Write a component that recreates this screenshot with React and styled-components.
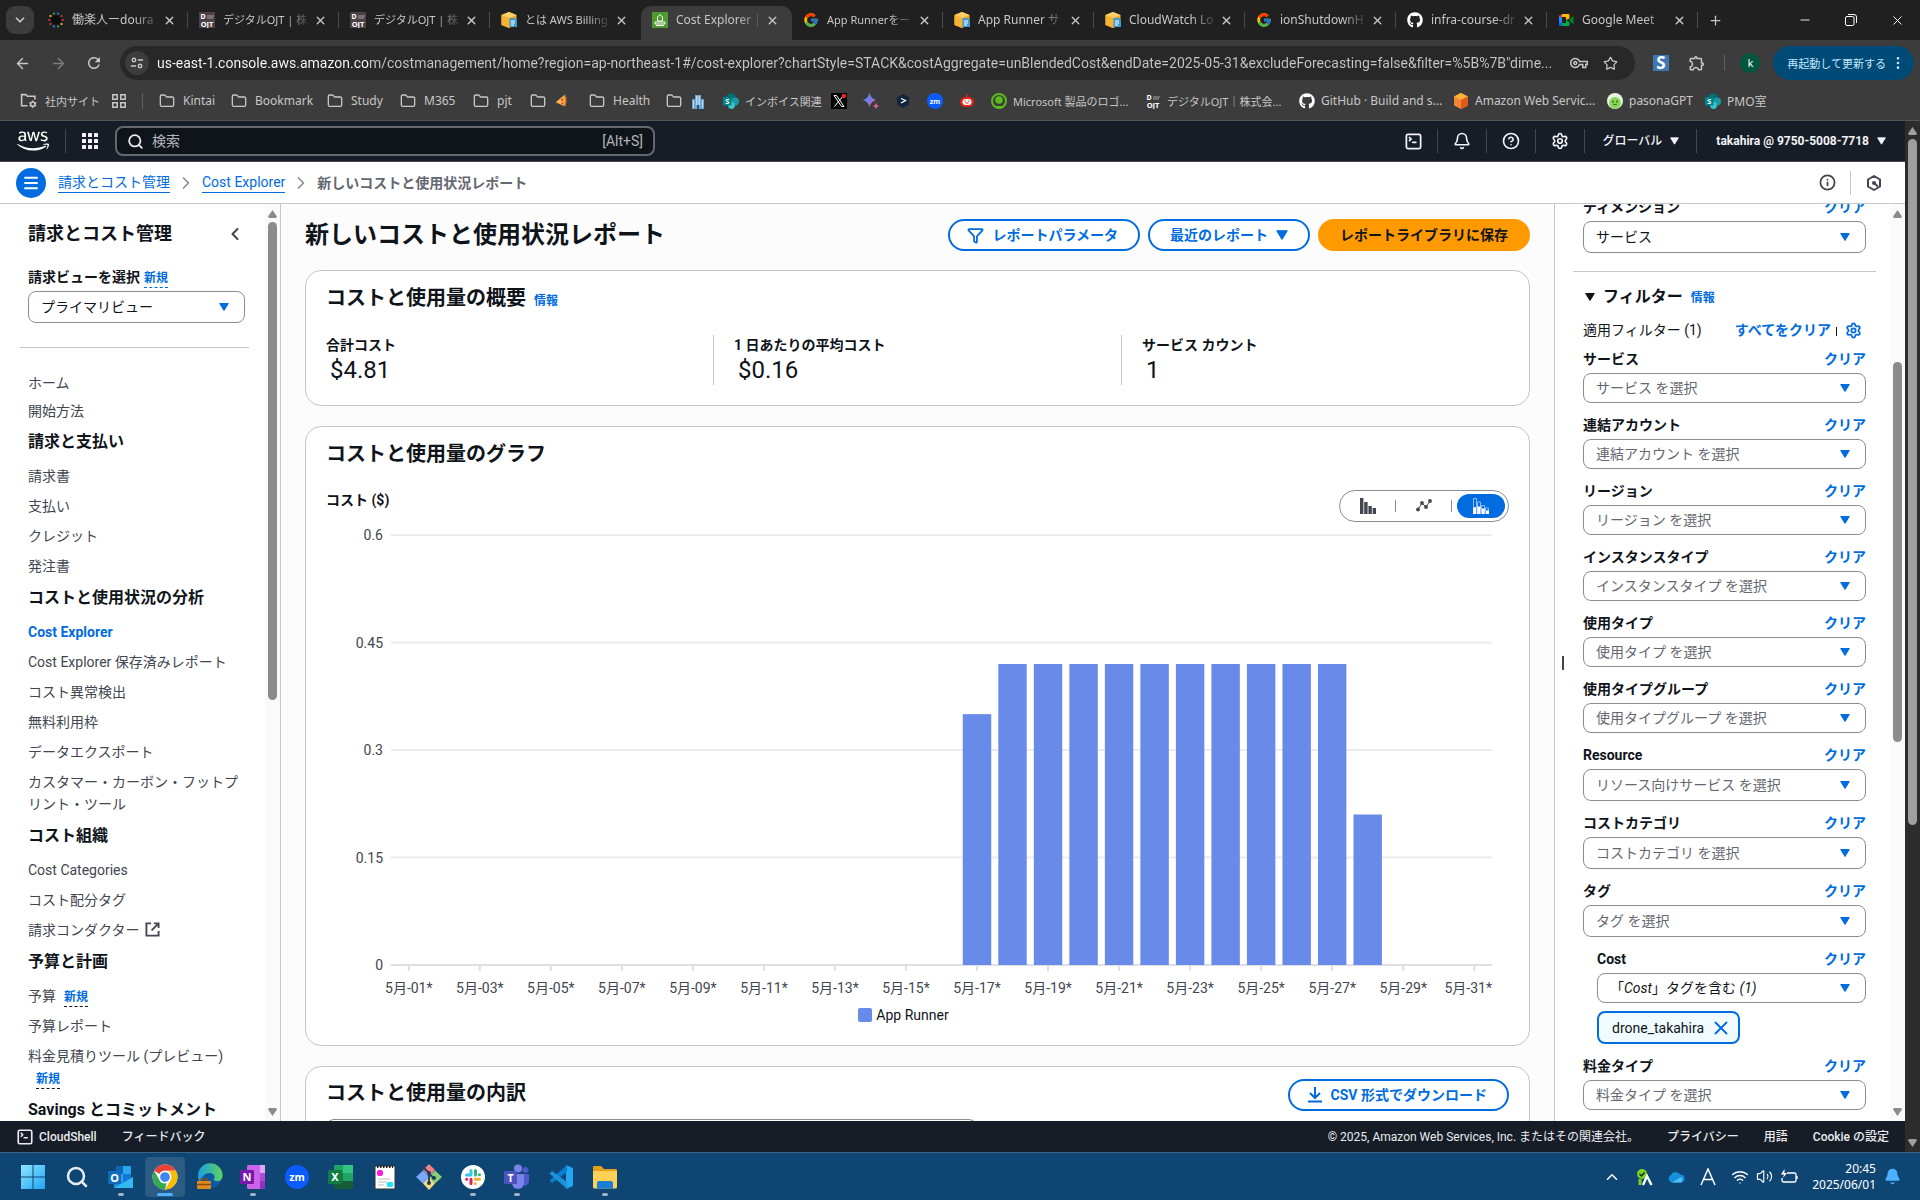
import React, { useId } from "react";
import styled, { createGlobalStyle, css } from "styled-components";
import {
  ArrowLeft, ArrowRight, Bell, ChevronDown, ChevronLeft, ChevronRight, ChevronUp, Search,
  CircleHelp, Folder, Info, Minus, MoreVertical, Plus, Settings, SquareTerminal,
  Star, Volume2, Wifi, X, Funnel, Menu,
} from "lucide-react";
import { FaAws, FaGithub } from "react-icons/fa";
import { FcGoogle } from "react-icons/fc";
import { MdOutlineExtension, MdOutlineVpnKey, MdRefresh } from "react-icons/md";

const uiFont = `"Noto Sans", "Open Sans", "Noto Sans CJK JP", sans-serif`;
const awsFont = `Roboto, "Noto Sans CJK JP", sans-serif`;

const c = {
  ink: "#0f141a",
  body: "#424650",
  muted: "#656871",
  blue: "#006ce0",
  line: "#c6c6cd",
  field: "#8c8c94",
  nav: "#161d26",
};

const GlobalStyle = createGlobalStyle`
  *, *::before, *::after { box-sizing: border-box; }
  body { margin: 0; background: #fff; }
  button, input, select { font: inherit; color: inherit; margin: 0; }
  button { background: none; border: 0; padding: 0; cursor: pointer; }
  ul, h1, h2, h3, p, dl, dd, dt { margin: 0; padding: 0; }
  ul { list-style: none; }
  a { color: inherit; text-decoration: none; }
  svg { display: block; flex: none; }
`;

const Screen = styled.div`
  display: flex;
  flex-direction: column;
  height: 100vh;
  overflow: hidden;
  font-family: ${uiFont};
`;

/* ---------- browser ---------- */

const TabStrip = styled.div`
  display: flex;
  align-items: flex-end;
  height: 40px;
  flex: none;
  background: #202020;
  color: #c7c7c7;
  font-size: 12px;
`;

const TabSearch = styled.button`
  display: grid;
  place-items: center;
  width: 28px;
  height: 28px;
  margin: 0 3px 6px 6px;
  border-radius: 9px;
  background: #3c3c3c;
`;

const Tab = styled.div`
  display: flex;
  align-items: center;
  gap: 8px;
  width: 151px;
  height: 34px;
  padding: 0 12px 6px 11px;
  ${(p) => p.$active && css`
    background: #3c3c3c;
    border-radius: 10px 10px 0 0;
  `}
`;

const TabTitle = styled.span`
  flex: 1;
  margin-right: -8px;
  overflow: hidden;
  white-space: nowrap;
  font-size: ${(p) => (p.$dense ? 11 : 12)}px;
  line-height: 18px;
  mask-image: linear-gradient(to right, #000 70%, transparent 100%);
`;

const TabDivider = styled.span`
  width: 1px;
  height: 16px;
  background: #4b4b4b;
  margin: 0 -12px 0 2px;
`;

const IconButton = styled.button`
  display: grid;
  place-items: center;
  width: ${(p) => p.$w || 24}px;
  height: ${(p) => p.$h || 24}px;
`;

const TabClose = styled(IconButton).attrs({ $w: 16, $h: 16 })``;

const NewTab = styled(IconButton).attrs({ $w: 34, $h: 34 })`
  padding-bottom: 6px;
`;

const WindowButtons = styled.div`
  display: flex;
  align-items: center;
  height: 40px;
  margin-left: auto;
  color: #fff;
`;

const Toolbar = styled.div`
  display: flex;
  align-items: center;
  height: 46px;
  flex: none;
  padding: 0 6px 0 4px;
  background: #3c3c3c;
  color: #c7c7c7;
`;

const AddressBar = styled.label`
  display: flex;
  align-items: center;
  flex: 1;
  height: 34px;
  margin: 0 18px 0 8px;
  padding: 0 12px 0 5px;
  border-radius: 17px;
  background: #282828;
`;

const SiteInfo = styled.span`
  display: grid;
  place-items: center;
  width: 24px;
  height: 24px;
  border-radius: 50%;
  background: #3c3c3c;
`;

const AddressInput = styled.input`
  flex: 1;
  min-width: 0;
  height: 30px;
  margin-left: 8px;
  padding: 0;
  border: 0;
  outline: 0;
  font-family: Roboto, sans-serif;
  font-size: 14px;
  color: transparent;
  background: linear-gradient(to right, #fff 213px, #c7c7c7 213px);
  background-clip: text;
  text-overflow: ellipsis;
`;

const ToolbarDivider = styled.span`
  width: 1px;
  height: 16px;
  background: #5f5f5f;
  margin: 0 15px 0 0;
`;

const Avatar = styled.span`
  display: grid;
  place-items: center;
  width: 20px;
  height: 20px;
  border-radius: 50%;
  background: #00563f;
  color: #fff;
  font-size: 11px;
  line-height: 20px;
`;

const UpdateButton = styled.button`
  display: flex;
  align-items: center;
  gap: 4px;
  height: 34px;
  margin-left: 13px;
  padding: 0 8px 0 14px;
  border-radius: 17px;
  background: #004a77;
  color: #c2e7ff;
  font-size: 11px;
`;

const Bookmarks = styled.nav`
  display: flex;
  align-items: center;
  height: 35px;
  flex: none;
  padding: 0 20px 5px;
  background: #3c3c3c;
  border-bottom: 1px solid #555;
  color: #c7c7c7;
  font-size: 12px;
`;

const Bookmark = styled.a`
  display: flex;
  align-items: center;
  gap: ${(p) => (p.$folder ? 8 : 6)}px;
  width: ${(p) => p.$w}px;
  height: 24px;
  font-size: ${(p) => (p.$dense ? 11 : 12)}px;
  white-space: nowrap;
  flex: none;
`;

const BookmarkDivider = styled.span`
  width: 1px;
  height: 16px;
  background: #5f5f5f;
  margin: 0 16px 0 0;
`;

/* ---------- scroll bars ---------- */

const Bar = styled.div`
  display: flex;
  flex-direction: column;
  align-items: center;
  width: 15px;
  flex: none;
  padding: 6px 0 5px;
  background: ${(p) => (p.$dark ? "#2c2c2c" : "#fafafa")};
  color: ${(p) => (p.$dark ? "#9f9f9f" : "#8b8b8b")};
`;

const Track = styled.div`
  display: flex;
  flex-direction: column;
  align-items: center;
  flex: 1;
  padding: 4px 0;
`;

const Space = styled.span`
  flex: ${(p) => p.$n} 0 0;
`;

const Thumb = styled.span`
  flex: ${(p) => p.$n} 0 0;
  width: 9px;
  border-radius: 5px;
  background: currentColor;
`;

function ScrollBar({ before, size, after, dark }) {
  return (
    <Bar $dark={dark} aria-hidden="true">
      <svg width="9" height="8"><path d="M4.500 0 9 6.500 8 8H1L0 6.500Z" fill="currentColor" /></svg>
      <Track>
        <Space $n={before} />
        <Thumb $n={size} />
        <Space $n={after} />
      </Track>
      <svg width="9" height="8"><path d="M4.500 8 9 1.500 8 0H1L0 1.500Z" fill="currentColor" /></svg>
    </Bar>
  );
}

/* ---------- console frame ---------- */

const Viewport = styled.div`
  display: flex;
  flex: 1;
  min-height: 0;
  font-family: ${awsFont};
  font-size: 14px;
  line-height: 20px;
  color: ${c.ink};
`;

const Page = styled.div`
  display: flex;
  flex-direction: column;
  flex: 1;
  min-width: 0;
`;

const TopNav = styled.header`
  display: flex;
  align-items: center;
  height: 41px;
  flex: none;
  padding-left: 17px;
  background: ${c.nav};
  border-bottom: 1px solid #424650;
  color: #f3f3f7;
  font-size: 12px;
  font-weight: 700;
`;

const NavDivider = styled.span`
  width: 1px;
  height: 24px;
  background: #424650;
  margin: 0 ${(p) => p.$m || 0}px;
`;

const SearchBox = styled.label`
  display: flex;
  align-items: center;
  gap: 8px;
  width: 540px;
  height: 30px;
  margin-left: 17px;
  margin-right: auto;
  padding: 0 10px;
  border: 2px solid #656871;
  border-radius: 8px;
  background: #0f141a;
  color: #b4b4bb;
  font-size: 14px;
  font-weight: 400;
`;

const SearchInput = styled.input`
  flex: 1;
  min-width: 0;
  border: 0;
  outline: 0;
  padding: 0;
  background: none;
  &::placeholder { color: #b4b4bb; opacity: 1; }
`;

const NavButton = styled.button`
  display: flex;
  align-items: center;
  justify-content: center;
  gap: 8px;
  height: 40px;
  min-width: 48px;
  padding: 0 ${(p) => p.$pad || 0}px;
  font-weight: ${(p) => (p.$light ? 500 : 700)};
`;

const Crumbs = styled.div`
  display: flex;
  align-items: center;
  height: 42px;
  flex: none;
  padding: 0 22px 0 16px;
  background: #fff;
  border-bottom: 1px solid ${c.line};
`;

const MenuButton = styled.button`
  display: grid;
  place-items: center;
  width: 30px;
  height: 30px;
  margin-right: 12px;
  border-radius: 50%;
  background: ${c.blue};
  color: #fff;
`;

const CrumbLink = styled.a`
  color: ${c.blue};
  border-bottom: 1px solid ${c.blue};
  line-height: 19px;
`;

const CrumbArrow = styled(ChevronRight).attrs({ size: 20, color: c.field })`
  margin: 0 6px;
`;

const CrumbCurrent = styled.span`
  color: ${c.muted};
  font-weight: 700;
`;

const CrumbTools = styled.div`
  display: flex;
  align-items: center;
  gap: 14px;
  margin-left: auto;
  color: ${c.body};
`;

const ToolDivider = styled.span`
  width: 1px;
  height: 24px;
  background: ${c.line};
`;

const Columns = styled.div`
  display: flex;
  flex: 1;
  min-height: 0;
  background: #fcfcfd;
`;

/* ---------- side navigation ---------- */

const SideNav = styled.aside`
  display: flex;
  width: 281px;
  flex: none;
  background: #fff;
  border-right: 1px solid ${c.line};
`;

const SideBody = styled.div`
  flex: 1;
  min-width: 0;
  padding: 19px 16px 0 20px;
  overflow: hidden;
`;

const SideInner = styled.div`
  padding: 0 4px 0 8px;
`;

const SideHead = styled.div`
  display: flex;
  align-items: center;
  justify-content: space-between;
  margin-bottom: 22px;
`;

const SideTitle = styled.h2`
  font-size: 18px;
  line-height: 22px;
`;

const FieldLabel = styled.label`
  display: block;
  height: 20px;
  font-weight: 700;
  line-height: 20px;
`;

const NewTag = styled.a`
  display: inline-block;
  margin-left: ${(p) => p.$gap || 8}px;
  color: ${c.blue};
  font-size: 12px;
  font-weight: 700;
  line-height: 18px;
  border-bottom: 1px dashed ${(p) => p.$edge || c.ink};
`;

const Rule = styled.hr`
  height: 1px;
  margin: 24px 0 21px;
  border: 0;
  background: ${c.line};
`;

const NavGroupTitle = styled.h3`
  font-size: 16px;
  line-height: 20px;
  padding: 7px 0 9px;
`;

const NavItem = styled.li`
  padding: ${(p) => (p.$tight ? 3 : 4)}px 0;
  line-height: 22px;
  color: ${(p) => (p.$active ? c.blue : c.body)};
  font-weight: ${(p) => (p.$active ? 700 : 400)};
`;

const InlineIcon = styled.span`
  display: inline-block;
  margin-left: 6px;
  vertical-align: -2px;
`;

/* ---------- form parts ---------- */

const SelectWrap = styled.div`
  display: flex;
  align-items: center;
  position: relative;
  margin-top: 4px;
`;

const fieldBox = css`
  width: 100%;
  height: ${(p) => p.$h || 30}px;
  padding: 0 36px 0 12px;
  border: 1px solid ${c.field};
  border-radius: 8px;
  background: #fff;
  text-align: left;
`;

const SelectBox = styled.select`
  ${fieldBox}
  appearance: none;
  color: ${(p) => (p.$empty ? c.muted : c.ink)};
`;

const MultiSelect = styled.button`
  ${fieldBox}
`;

const SelectCaret = styled.span`
  position: absolute;
  right: 16px;
  color: ${c.blue};
  pointer-events: none;
`;

const Caret = ({ w = 10, h = 8 }) => (
  <svg width={w} height={h} viewBox="0 0 10 8" aria-hidden="true">
    <path d="M.7.500H9.300L5 7.500Z" fill="currentColor" stroke="currentColor" strokeLinejoin="round" />
  </svg>
);

function Select({ id, value, height, empty }) {
  return (
    <SelectWrap>
      <SelectBox id={id} $h={height} $empty={empty}>
        <option>{value}</option>
      </SelectBox>
      <SelectCaret><Caret /></SelectCaret>
    </SelectWrap>
  );
}

/* ---------- main ---------- */

const Main = styled.main`
  flex: 1;
  min-width: 0;
  padding: 15px 24px 0;
  overflow: hidden;
`;

const PageHead = styled.div`
  display: flex;
  align-items: center;
  gap: 8px;
  margin-bottom: 19px;
`;

const PageTitle = styled.h1`
  flex: 1;
  font-size: 24px;
  line-height: 30px;
`;

const PillButton = styled.button`
  display: flex;
  align-items: center;
  gap: 8px;
  height: 32px;
  padding: 0 20px 0 ${(p) => (p.$icon ? 17 : 20)}px;
  border: 2px solid ${(p) => (p.$primary ? "#ff9900" : c.blue)};
  border-radius: 16px;
  background: ${(p) => (p.$primary ? "#ff9900" : "#fff")};
  color: ${(p) => (p.$primary ? c.ink : c.blue)};
  font-weight: 700;
  white-space: nowrap;
`;

const Card = styled.section`
  margin-bottom: 20px;
  padding: ${(p) => p.$top || 13}px 20px 20px;
  border: 1px solid ${c.line};
  border-radius: 16px;
  background: #fff;
`;

const CardTitle = styled.h2`
  font-size: 20px;
  line-height: 28px;
`;

const InfoLink = styled.a`
  margin-left: 8px;
  color: ${c.blue};
  font-size: 12px;
  font-weight: 700;
  line-height: 16px;
`;

const Metrics = styled.dl`
  display: grid;
  grid-template-columns: repeat(3, 1fr);
  column-gap: 41px;
  margin-top: 23px;
`;

const Metric = styled.div`
  & + & {
    margin-left: -21px;
    padding-left: 20px;
    border-left: 1px solid ${c.line};
  }
`;

const MetricLabel = styled.dt`
  font-weight: 700;
`;

const MetricValue = styled.dd`
  padding-left: 4px;
  font-size: 24px;
  line-height: 30px;
`;

const SplitRow = styled.div`
  display: flex;
  justify-content: space-between;
  align-items: flex-start;
  margin-top: ${(p) => p.$gap || 0}px;
`;

const AxisTitle = styled.span`
  font-weight: 700;
`;

const Segments = styled.div`
  display: flex;
  align-items: center;
  height: 32px;
  padding-right: 3px;
  border: 1px solid ${c.field};
  border-radius: 16px;
  color: ${c.body};
`;

const Segment = styled.button`
  display: grid;
  place-items: center;
  width: ${(p) => (p.$active ? 48 : 55)}px;
  height: 24px;
  margin-left: ${(p) => (p.$active ? 5 : 0)}px;
  border-radius: 12px;
  background: ${(p) => (p.$active ? c.blue : "none")};
  color: ${(p) => (p.$active ? "#fff" : c.body)};
`;

const SegmentDivider = styled.span`
  width: 1px;
  height: 12px;
  background: ${c.field};
`;

const PlotArea = styled.div`
  padding: 0 17px 0 65px;
`;

const Plot = styled.svg`
  width: 100%;
  height: 483px;
  overflow: visible;
`;

const PlotText = styled.text`
  fill: ${c.body};
  font-size: 14px;
`;

const Legend = styled.div`
  display: flex;
  align-items: center;
  justify-content: center;
  gap: 4px;
  padding-right: 28px;
`;

const Swatch = styled.span`
  width: 14px;
  height: 14px;
  border-radius: 2px;
  background: #688ae8;
`;

const TableSearch = styled.input`
  display: block;
  width: 55%;
  height: 32px;
  margin-top: 8px;
  border: 1px solid ${c.field};
  border-radius: 8px;
`;

const CHART_TOP = 13;
const CHART_HEIGHT = 430;
const CHART_MAX = 0.6;
const costs = Array.from({ length: 31 }, (_, i) => {
  const day = i + 1;
  if (day === 17) return 0.35;
  if (day === 28) return 0.21;
  return day > 17 && day < 28 ? 0.42 : 0;
});
const yOf = (v) => CHART_TOP + CHART_HEIGHT * (1 - v / CHART_MAX);
const xOf = (i) => `${((i + 0.5) / 31) * 100}%`;

function CostChart() {
  return (
    <>
      <PlotArea>
        <Plot role="img" aria-label="コストと使用量のグラフ">
          {[0.6, 0.45, 0.3, 0.15, 0].map((v) => (
            <g key={v}>
              <line x1="0" x2="100%" y1={yOf(v)} y2={yOf(v)} stroke={v ? "#ebebf0" : "#dedee3"} strokeWidth="2" />
              <PlotText x="-8" y={yOf(v) + 5} textAnchor="end">{v}</PlotText>
            </g>
          ))}
          {costs.map((v, i) => (
            <g key={i}>
              {v > 0 && (
                <rect x={`${((i + 0.1) / 31) * 100}%`} width={`${(0.8 / 31) * 100}%`} y={yOf(v)} height={yOf(0) - yOf(v)} fill="#688ae8" />
              )}
              {i % 2 === 0 && (
                <>
                  <line x1={xOf(i)} x2={xOf(i)} y1={yOf(0)} y2={yOf(0) + 6} stroke="#dedee3" strokeWidth="2" />
                  <PlotText x={i === 30 ? "100%" : xOf(i)} y={yOf(0) + 28} textAnchor={i === 30 ? "end" : "middle"}>
                    {`5月-${String(i + 1).padStart(2, "0")}*`}
                  </PlotText>
                </>
              )}
            </g>
          ))}
        </Plot>
      </PlotArea>
      <Legend><Swatch />App Runner</Legend>
    </>
  );
}

/* ---------- filter panel ---------- */

const Panel = styled.aside`
  display: flex;
  width: 351px;
  flex: none;
  background: #fff;
  border-left: 1px solid ${c.line};
`;

const Handle = styled.span`
  align-self: center;
  width: 2px;
  height: 14px;
  margin: 0 9px 0 7px;
  background: ${c.body};
`;

const PanelBody = styled.div`
  flex: 1;
  min-width: 0;
  padding-right: 14px;
  overflow: hidden;
`;

const PanelScroll = styled.div`
  margin-top: -7px;
`;

const PanelGroup = styled.div`
  padding: 0 10px;
`;

const PanelRule = styled.hr`
  height: 1px;
  margin: 18px 0 15px;
  border: 0;
  background: ${c.line};
`;

const FilterHead = styled.div`
  display: flex;
  align-items: center;
  gap: 8px;
  height: 20px;
  padding-left: 2px;
`;

const FilterTitle = styled.h3`
  font-size: 16px;
  line-height: 20px;
`;

const FilterSummary = styled.div`
  display: flex;
  align-items: center;
  gap: 5px;
  height: 20px;
  margin: 13px 0 9px;
  padding-right: 4px;
`;

const Grow = styled.span`
  flex: 1;
`;

const LinkButton = styled.button`
  color: ${c.blue};
  font-weight: 700;
  line-height: 20px;
`;

const Pipe = styled.span`
  width: 1px;
  height: 9px;
  margin: 3px 3px 0 0;
  background: ${c.ink};
`;

const Field = styled.div`
  margin-bottom: 12px;
  padding-left: ${(p) => (p.$nested ? 14 : 0)}px;
`;

const FieldHead = styled.div`
  display: flex;
  justify-content: space-between;
`;

const Token = styled.span`
  display: inline-flex;
  align-items: center;
  gap: 6px;
  height: 33px;
  margin-top: 8px;
  padding: 0 6px 0 13px;
  border: 2px solid ${c.blue};
  border-radius: 8px;
  background: #f0fbff;
  vertical-align: top;
`;

function Filter({ label, value, height, filled }) {
  const id = useId();
  return (
    <Field>
      <FieldHead>
        <FieldLabel htmlFor={id}>{label}</FieldLabel>
        <LinkButton>クリア</LinkButton>
      </FieldHead>
      <Select id={id} value={value || `${label} を選択`} height={height} empty={!filled} />
    </Field>
  );
}

/* ---------- footer ---------- */

const Footer = styled.footer`
  display: flex;
  align-items: center;
  height: 31px;
  flex: none;
  padding: 0 16px;
  background: ${c.nav};
  color: #ebebf0;
  font-size: 12px;
`;

const FooterLink = styled.a`
  display: flex;
  align-items: center;
  gap: 5px;
  margin-right: ${(p) => (p.$first ? 25 : 0)}px;
  margin-left: ${(p) => p.$gap || 0}px;
  font-weight: 500;
`;

const Copyright = styled.span`
  margin-left: auto;
`;

/* ---------- task bar ---------- */

const TaskBar = styled.div`
  display: flex;
  align-items: center;
  height: 48px;
  flex: none;
  padding: 0 19px 0 13px;
  background: #0f4573;
  border-top: 1px solid #3d6486;
  color: #fff;
`;

const TaskButton = styled.button`
  display: flex;
  flex-direction: column;
  align-items: center;
  justify-content: center;
  width: 40px;
  height: 40px;
  margin-right: 4px;
  border-radius: 4px;
  background: ${(p) => (p.$active ? "rgba(255, 255, 255, 0.12)" : "none")};
  position: relative;
  &::after {
    content: "";
    position: absolute;
    bottom: 1px;
    width: ${(p) => (p.$active ? 16 : 6)}px;
    height: 3px;
    border-radius: 2px;
    background: ${(p) => (p.$active ? "#4cb2ff" : p.$open ? "#9fb4c6" : "transparent")};
  }
`;

const Tray = styled.div`
  display: flex;
  align-items: center;
  gap: 14px;
  margin-left: auto;
`;

const TrayStatus = styled.button`
  display: flex;
  align-items: center;
  gap: 7px;
`;

const Clock = styled.div`
  margin-right: -6px;
  text-align: right;
  font-size: 12px;
  line-height: 16px;
`;

/* ---------- drawings ---------- */

const Svg = ({ s = 16, box = 16, children, ...rest }) => (
  <svg width={s} height={s} viewBox={`0 0 ${box} ${box}`} fill="none" aria-hidden="true" {...rest}>{children}</svg>
);

const Glyph = ({ x = 8, y = 11, size = 9, fill = "#fff", children }) => (
  <text x={x} y={y} fontSize={size} fontWeight="700" fill={fill} textAnchor="middle" fontFamily="Noto Sans, sans-serif">{children}</text>
);

const DotsRing = () => (
  <Svg>
    {Array.from({ length: 10 }, (_, i) => {
      const a = (i * Math.PI) / 5;
      return <circle key={i} cx={8 + 6.8 * Math.cos(a)} cy={8 + 6.8 * Math.sin(a)} r="1.100" fill={["#e53935", "#fbc02d", "#43a047", "#1e88e5", "#e53935"][i % 5]} />;
    })}
    <circle cx="8" cy="8" r="4.600" fill="#0c0c0c" />
  </Svg>
);

const OjtIcon = ({ bare }) => (
  <Svg>
    {!bare && <rect width="16" height="16" fill="#4a4045" />}
    <Glyph x={4} y={7} size={7}>D</Glyph>
    <path d="M8 4h7M8 6h6" stroke="#bbb" strokeWidth=".8" />
    <Glyph x={8} y={14.5} size={7.5}>OJT</Glyph>
  </Svg>
);

const AwsDocIcon = () => (
  <Svg>
    <path d="M8 0 15.500 3v10L8 16 .5 13V3Z" fill="#f0a830" />
    <path d="M8 0 15.500 3 8 6 .5 3Z" fill="#fdd06b" />
    <path d="M8 6v10L.5 13V3Z" fill="#f5b335" />
    <path d="M8.500 6h5.500l2 2v7H8.500Z" fill="#3d9bd1" />
    <path d="M10 9h4M10 11h4M10 13h3" stroke="#fff" />
  </Svg>
);

const CostIcon = () => (
  <Svg>
    <rect width="16" height="16" fill="#4d9a2f" />
    <path d="M8 2.500 10.500 5v4h-5V5ZM3 10h10v2H3ZM4 13.500h8" stroke="#fff" />
  </Svg>
);

const MeetIcon = () => (
  <Svg>
    <path d="M1 3.500h3V13H2a1 1 0 0 1-1-1Z" fill="#2684fc" />
    <path d="M4 2v3H1Z" fill="#ea4335" />
    <path d="M4 2h6.500a1 1 0 0 1 1 1v3.500L8 8V5H4Z" fill="#ffba00" />
    <path d="M4 14v-3h4V8l3.500 2v3a1 1 0 0 1-1 1Z" fill="#00ac47" />
    <path d="M11 8 15.500 4v8.500Z" fill="#00832d" />
    <path d="M1 11h3v3H2a1 1 0 0 1-1-1Z" fill="#0066da" />
  </Svg>
);

const SharePointIcon = () => (
  <Svg>
    <circle cx="8" cy="5" r="4.800" fill="#036c70" />
    <circle cx="12" cy="8.500" r="4" fill="#1a9ba1" />
    <circle cx="8.500" cy="12.500" r="3.400" fill="#37c6d0" />
    <rect y="4" width="8.500" height="8.500" rx="1" fill="#038387" />
    <Glyph x={4.2} y={11} size={7.5}>S</Glyph>
  </Svg>
);

const XIcon = () => (
  <Svg>
    <rect width="16" height="16" fill="#000" />
    <path d="M3 2.500h2.500L13 13.500h-2.500ZM12.500 2.500 3.500 13.500" stroke="#fff" />
    <circle cx="13" cy="3" r="2.200" fill="#f4212e" />
  </Svg>
);

const SparkleIcon = () => (
  <Svg>
    <defs>
      <linearGradient id="spark" x1="0" y1="0" x2="1" y2="1">
        <stop stopColor="#3ba0f4" /><stop offset=".5" stopColor="#7a78e8" /><stop offset="1" stopColor="#e66a8c" />
      </linearGradient>
    </defs>
    <path d="M6.500 0Q8 5.500 13 7 8 8.500 6.500 14 5 8.500 0 7 5 5.500 6.500 0Z" fill="url(#spark)" />
    <path d="M13 10q.6 2.400 3 3-2.400.6-3 3-.6-2.400-3-3 2.400-.6 3-3Z" fill="#e0618f" />
  </Svg>
);

const HexPromptIcon = () => (
  <Svg>
    <path d="M8 1 14 4.500v7L8 15 2 11.500v-7Z" fill="#10263f" />
    <path d="m6 5.500 4.500 2L6 10" stroke="#fff" strokeWidth="1.300" />
  </Svg>
);

const ZoomIcon = ({ s = 16 }) => (
  <Svg s={s}>
    <circle cx="8" cy="8" r="8" fill="#0b5cff" />
    <Glyph y={10.5} size={7}>zm</Glyph>
  </Svg>
);

const RobotIcon = () => (
  <Svg>
    <path d="M8 1v3" stroke="#e2231a" strokeWidth="1.500" />
    <rect x="1" y="4" width="14" height="10" rx="5" fill="#e2231a" />
    <rect x="3.500" y="6" width="9" height="6" rx="3" fill="#fff" />
    <path d="M5.500 8h1.500M9 8h1.500M6.500 10h3" stroke="#e2231a" />
  </Svg>
);

const GreenRingIcon = () => (
  <Svg>
    <circle cx="8" cy="8" r="7" stroke="#5dbb1c" strokeWidth="2" />
    <circle cx="8" cy="7" r="3.800" fill="#5dbb1c" />
    <path d="M5 14h6" stroke="#5dbb1c" strokeWidth="2" />
  </Svg>
);

const CubeIcon = () => (
  <Svg>
    <path d="M8 0 15 3.500v9L8 16 1 12.500v-9Z" fill="#f58536" />
    <path d="M8 0 15 3.500 8 7 1 3.500Z" fill="#fbb03b" />
    <path d="M8 7v9l7-3.500v-9Z" fill="#e05a1b" />
  </Svg>
);

const PasonaIcon = () => (
  <Svg>
    <circle cx="8" cy="8" r="8" fill="#e9f6df" />
    <circle cx="8" cy="10" r="6" fill="#8bd65a" />
    <circle cx="6" cy="8.500" r="1" fill="#33691e" />
    <circle cx="10" cy="8.500" r="1" fill="#33691e" />
    <path d="M6 11q2 1.500 4 0" stroke="#33691e" />
  </Svg>
);

const PizzaIcon = () => (
  <Svg s={13}>
    <path d="M2 10 13 1q3 7 0 14Z" fill="#f9b248" />
    <path d="M13 1q3 7 0 14" stroke="#c8743a" strokeWidth="2" />
    <circle cx="10" cy="7" r="1.500" fill="#d84a2b" />
    <circle cx="10.500" cy="11.500" r="1.300" fill="#d84a2b" />
  </Svg>
);

const BuildingIcon = () => (
  <Svg>
    <path d="M2 6h3V2h6v4h3v10H2Z" fill="#6fa5cf" />
    <path d="M6.500 3v9M8 3v9M9.500 3v9M3.500 7.500v7M12.500 7.500v7" stroke="#d8ecfa" strokeWidth=".7" />
    <path d="M7 12h2v4H7Z" fill="#2e5877" />
  </Svg>
);

const AppsIcon = () => (
  <Svg s={16}>
    <path d="M1.800 1.800h4.400v4.400H1.800ZM9.800 1.800h4.400v4.400H9.800ZM1.800 9.800h4.400v4.400H1.800ZM9.800 9.800h4.400v4.400H9.800Z" stroke="currentColor" strokeWidth="1.500" />
  </Svg>
);

const ManagedFolder = () => (
  <Svg s={17}>
    <path d="M7 13H1.500V2.500h4L7 4h7v3" stroke="currentColor" strokeWidth="1.500" />
    <circle cx="12" cy="11.500" r="2" stroke="currentColor" strokeWidth="1.400" />
    <path d="M12 8v1.500M12 13.500V15M8.800 10l1.300.7M14 12.500l1.300.7M8.800 13.200l1.300-.7M14 10.700l1.300-.7" stroke="currentColor" strokeWidth="1.200" />
  </Svg>
);

const TuneIcon = () => (
  <Svg s={14}>
    <circle cx="4.500" cy="4.500" r="2" stroke="currentColor" strokeWidth="1.600" />
    <path d="M9 4.500h6M1 11.500h6" stroke="currentColor" strokeWidth="1.600" />
    <circle cx="11.500" cy="11.500" r="2" stroke="currentColor" strokeWidth="1.600" />
  </Svg>
);

const SIcon = () => (
  <Svg>
    <rect width="16" height="16" fill="#3d78b4" />
    <Glyph y={14} size={17}>S</Glyph>
  </Svg>
);

const RestoreIcon = () => (
  <Svg s={12} box={12}>
    <rect x=".5" y="2.500" width="8.500" height="9" rx="1.500" stroke="currentColor" />
    <path d="M3 .5h6A2.500 2.500 0 0 1 11.500 3v6" stroke="currentColor" />
  </Svg>
);

const NineDots = () => (
  <Svg>
    {[0, 6, 12].map((y) => [0, 6, 12].map((x) => <rect key={`${x}-${y}`} x={x} y={y} width="4" height="4" rx=".5" fill="currentColor" />))}
  </Svg>
);

const HexQ = () => (
  <Svg>
    <path d="M8 1 14 4.500v7L8 15 2 11.500v-7Z" stroke="currentColor" strokeWidth="2" strokeLinejoin="round" />
    <circle cx="8" cy="8" r="2" fill="currentColor" />
    <path d="m8 8 4 3.500" stroke="currentColor" strokeWidth="2" />
  </Svg>
);

const ExternalIcon = () => (
  <Svg s={15}>
    <path d="M6.500 1.500h-5v13h13v-5M9.500 1.500h5v5M14 2 7 9" stroke="currentColor" strokeWidth="2" />
  </Svg>
);

const BarsIcon = () => (
  <Svg>
    <path d="M0 0h3.400v16H0ZM4.200 4h3.400v12H4.200ZM8.400 8h3.400v8H8.400ZM12.600 10H16v6h-3.400Z" fill="currentColor" />
  </Svg>
);

const LineIcon = () => (
  <Svg>
    <path d="M2 11.500 6 5l4 4 4.500-6.500" stroke="currentColor" />
    <circle cx="2" cy="11.500" r="1.900" fill="currentColor" />
    <circle cx="6" cy="5" r="1.900" fill="currentColor" />
    <circle cx="10" cy="9" r="1.900" fill="currentColor" />
    <circle cx="14" cy="3" r="1.900" fill="currentColor" />
  </Svg>
);

const StackIcon = () => (
  <Svg>
    <path d="M.5.500h3v9h-3ZM4.500 4h3v6h-3ZM8.500 7.500h3v4h-3ZM12.500 10h3v3h-3Z" stroke="#8cbcf3" />
    <path d="M0 9.500h3.500V16H0ZM4.200 8.500h3.400V16H4.200ZM8.400 10.500h3.400V16H8.400ZM12.600 12.500H16V16h-3.400Z" fill="currentColor" />
  </Svg>
);

const DownloadIcon = () => (
  <Svg>
    <path d="M8 0v10M3 6l5 5 5-5M1 14.500h14" stroke="currentColor" strokeWidth="2" />
  </Svg>
);

const WindowsIcon = () => (
  <Svg s={28} box={28}>
    <defs>
      <linearGradient id="win" x1="0" y1="0" x2="1" y2="1"><stop stopColor="#8fe6ff" /><stop offset="1" stopColor="#1fa4f4" /></linearGradient>
    </defs>
    <path d="M2 2h11.500v11.500H2ZM14.500 2H26v11.500H14.500ZM2 14.500h11.500V26H2ZM14.500 14.500H26V26H14.500Z" fill="url(#win)" />
  </Svg>
);

const OutlookIcon = () => (
  <Svg s={26} box={26}>
    <rect x="8" y="2" width="15" height="16" rx="1" fill="#28a8ea" />
    <path d="M8 2h7v8H8Z" fill="#0a66b9" /><path d="M15 10h8v8h-8Z" fill="#0f78d4" />
    <path d="m6 13 10 6 9-6v11H6Z" fill="#1490df" /><path d="m6 24 19-11v11Z" fill="#35b8f1" />
    <rect x="0" y="7" width="13" height="13" rx="1" fill="#0f6cbd" />
    <Glyph x={6.5} y={17.5} size={11}>O</Glyph>
  </Svg>
);

const ChromeIcon = () => (
  <Svg s={26} box={48}>
    <circle cx="24" cy="24" r="23" fill="#fff" />
    <path d="M24 1a23 23 0 0 1 20 11.500H24a11.500 11.500 0 0 0-10 5.800L4 12.500A23 23 0 0 1 24 1Z" fill="#ea4335" />
    <path d="M44 12.500A23 23 0 0 1 24 47l10-17.200a11.500 11.500 0 0 0 0-11.600L31 12.500Z" fill="#fbbc04" />
    <path d="M4 12.500 14 29.800a11.500 11.500 0 0 0 13 5.400L24 47A23 23 0 0 1 4 12.500Z" fill="#34a853" />
    <circle cx="24" cy="24" r="11.500" fill="#fff" /><circle cx="24" cy="24" r="9" fill="#4285f4" />
  </Svg>
);

const EdgeIcon = () => (
  <Svg s={27} box={27}>
    <defs><linearGradient id="edge" x1="0" y1="0" x2="1" y2="0"><stop stopColor="#1b9de2" /><stop offset="1" stopColor="#5fd35f" /></linearGradient></defs>
    <circle cx="14" cy="13" r="12" fill="#0c59a4" />
    <path d="M2 13a12 12 0 0 1 24.500-1c.5 6-6 7.500-9 5 2-2 1-7-4-7-5 0-9 4-8 11A12 12 0 0 1 2 13Z" fill="url(#edge)" />
    <rect x="1" y="18" width="14" height="8" rx="1" fill="#e08a1e" />
    <path d="M5 18v-2h6v2M1 21.500h14" stroke="#8a4b08" strokeWidth="1.400" />
  </Svg>
);

const OneNoteIcon = () => (
  <Svg s={26} box={26}>
    <rect x="7" y="1" width="18" height="24" rx="1.500" fill="#ca64ea" />
    <path d="M20 1h5v8h-5Z" fill="#e3a5f5" /><path d="M20 9h5v8h-5Z" fill="#ae4bd5" /><path d="M20 17h5v8h-5Z" fill="#9332bf" />
    <rect x="0" y="6" width="14" height="14" rx="1" fill="#7719aa" />
    <Glyph x={7} y={17} size={11}>N</Glyph>
  </Svg>
);

const ExcelIcon = () => (
  <Svg s={26} box={26}>
    <rect x="6" y="1" width="19" height="24" rx="1" fill="#21a366" />
    <path d="M15 1h10v8H15Z" fill="#33c481" /><path d="M6 9h9v8H6Z" fill="#107c41" /><path d="M6 17h19v8H6Z" fill="#185c37" />
    <rect x="0" y="6" width="14" height="14" rx="1" fill="#107c41" />
    <Glyph x={7} y={17} size={11}>X</Glyph>
  </Svg>
);

const MemoIcon = () => (
  <Svg s={26} box={26}>
    <rect x="3" y="2" width="20" height="23" rx="1" fill="#fff" stroke="#333" />
    <path d="M5 2.500h16" stroke="#222" strokeWidth="3" strokeDasharray="1.500 1.500" />
    <rect x="5" y="6" width="6" height="6" rx="2" fill="#ff1ae0" />
    <path d="M6 15h12M6 18h9M6 21h6" stroke="#bbb" />
    <rect x="15" y="18" width="6" height="5" rx="1" fill="#1ae8f5" />
  </Svg>
);

const GitIcon = () => (
  <Svg s={26} box={26}>
    <path d="M13 0 19 6l-6 7-6-7Z" fill="#f4808a" /><path d="m19 6.500 7 6.500-7 6.500L13 13Z" fill="#8cd17a" />
    <path d="M13 13 19 19.500 13 26l-6-6.500Z" fill="#f6dc7c" /><path d="M7 6.500 13 13l-6 6.500L0 13Z" fill="#79a9ff" />
    <path d="m8 4 5 5v10M13 10l5 4" stroke="#1c3a5c" strokeWidth="1.800" />
    <circle cx="13" cy="9" r="2" fill="#1c3a5c" /><circle cx="13" cy="19" r="2" fill="#1c3a5c" /><circle cx="18" cy="14" r="2" fill="#1c3a5c" />
  </Svg>
);

const SlackIcon = () => (
  <Svg s={24} box={24}>
    <circle cx="12" cy="12" r="12" fill="#fff" />
    <g strokeWidth="3" strokeLinecap="round">
      <path d="M10 5.500V10M5.500 10H10" stroke="#36c5f0" /><path d="M14.500 5.500V10M18.500 9.800h-.1" stroke="#2eb67d" />
      <path d="M14.200 14.200h4.300M14.200 18.400v.1" stroke="#ecb22e" /><path d="M10 14.200v4.300M5.600 14.200h.1" stroke="#e01e5a" />
    </g>
  </Svg>
);

const TeamsIcon = () => (
  <Svg s={26} box={26}>
    <circle cx="14" cy="4.500" r="4" fill="#7b83eb" /><circle cx="21.500" cy="6" r="3" fill="#5059c9" />
    <path d="M17 10h8v8a4.500 4.500 0 0 1-8 2Z" fill="#5059c9" /><path d="M8 10h12v9a6 6 0 0 1-12 0Z" fill="#7b83eb" />
    <rect x="0" y="7" width="13" height="13" rx="1" fill="#4b53bc" />
    <Glyph x={6.5} y={17.5} size={10.5}>T</Glyph>
  </Svg>
);

const CodeIcon = () => (
  <Svg s={26} box={26}>
    <path d="M18 1 25 4v18l-7 3Z" fill="#24a6f2" /><path d="M19 1 1.500 16.500 4 19 19 8Z" fill="#0a7fd0" />
    <path d="M19 25 1.500 9.500 4 7l15 11Z" fill="#1c92dc" />
  </Svg>
);

const ExplorerIcon = () => (
  <Svg s={26} box={26}>
    <path d="M1 3a1 1 0 0 1 1-1h7l3 3h12a1 1 0 0 1 1 1v4H1Z" fill="#e3a018" />
    <path d="M1 7h24v16a1.500 1.500 0 0 1-1.500 1.500h-21A1.500 1.500 0 0 1 1 23Z" fill="#ffd257" />
    <path d="M5 24.500V19a2 2 0 0 1 2-2h12a2 2 0 0 1 2 2v5.500Z" fill="#1c7fd6" />
  </Svg>
);

const SafeIcon = () => (
  <Svg s={18} box={18}>
    <circle cx="7" cy="6" r="5" fill="#7bd321" /><path d="m4.500 6 2 2 3-3.500" stroke="#123" strokeWidth="1.400" />
    <path d="M5 11v6" stroke="#7bd321" strokeWidth="3" /><path d="m8 17 4-9 4.500 9" stroke="#fff" strokeWidth="2.400" />
  </Svg>
);

const CloudIcon = () => (
  <Svg s={18} box={18}>
    <path d="M4.500 14.500A4 4 0 0 1 4 7a5 5 0 0 1 9-.5 4 4 0 0 1 1 8Z" fill="#1490df" /><path d="M5 14.500 14 9a3.500 3.500 0 0 1 0 5.500Z" fill="#50c0f8" />
  </Svg>
);

const LetterA = () => (
  <Svg s={18} box={18}><path d="M2 17 9 1l7 16M4.500 11.500h9" stroke="currentColor" strokeWidth="1.500" /></Svg>
);

const BatteryIcon = () => (
  <Svg s={18} box={18}>
    <path d="M7 5h7.500a1.500 1.500 0 0 1 1.500 1.500v6a1.500 1.500 0 0 1-1.500 1.500h-11A1.500 1.500 0 0 1 2 12.500V10M17 8v3" stroke="currentColor" strokeWidth="1.300" />
    <path d="M4.500 1 1 6.500h3L3 10l4-5H4.500Z" fill="currentColor" />
  </Svg>
);

/* ---------- data ---------- */

const tabs = [
  { title: "働楽人ーdoura", icon: <DotsRing /> },
  { title: "デジタルOJT | 株", icon: <OjtIcon />, dense: true },
  { title: "デジタルOJT | 株", icon: <OjtIcon />, dense: true },
  { title: "とは AWS Billing", icon: <AwsDocIcon />, dense: true },
  { title: "Cost Explorer |", icon: <CostIcon />, active: true },
  { title: "App Runnerをー", icon: <FcGoogle size={16} />, dense: true },
  { title: "App Runner サ", icon: <AwsDocIcon /> },
  { title: "CloudWatch Lo", icon: <AwsDocIcon /> },
  { title: "ionShutdownH", icon: <FcGoogle size={16} /> },
  { title: "infra-course-dr", icon: <FaGithub size={16} color="#fff" /> },
  { title: "Google Meet", icon: <MeetIcon /> },
];

const folder = <Folder size={16} strokeWidth={2} />;

const bookmarks = [
  ["Kintai", folder, 72],
  ["Bookmark", folder, 96],
  ["Study", folder, 73],
  ["M365", folder, 73],
  ["pjt", folder, 57],
  [<PizzaIcon />, folder, 59],
  ["Health", folder, 77],
  [<BuildingIcon />, folder, 57],
  ["インボイス関連", <SharePointIcon />, 108, true],
  ["", <XIcon />, 32],
  ["", <SparkleIcon />, 32],
  ["", <HexPromptIcon />, 32],
  ["", <ZoomIcon />, 32],
  ["", <RobotIcon />, 32],
  ["Microsoft 製品のロゴ...", <GreenRingIcon />, 154, true],
  ["デジタルOJT｜株式会...", <OjtIcon bare />, 154, true],
  ["GitHub · Build and s...", <FaGithub size={16} color="#fff" />, 154],
  ["Amazon Web Servic...", <CubeIcon />, 154],
  ["pasonaGPT", <PasonaIcon />, 98],
  ["PMO室", <SharePointIcon />, 70],
];

const navGroups = [
  ["請求と支払い", ["請求書", "支払い", "クレジット", "発注書"]],
  ["コストと使用状況の分析", [
    "Cost Explorer", "Cost Explorer 保存済みレポート", "コスト異常検出", "無料利用枠", "データエクスポート",
    "カスタマー・カーボン・フットプリント・ツール",
  ]],
  ["コスト組織", ["Cost Categories", "コスト配分タグ", "請求コンダクター"]],
  ["予算と計画", ["予算", "予算レポート", "料金見積りツール (プレビュー)"]],
  ["Savings とコミットメント", []],
];
const newItems = ["予算", "料金見積りツール (プレビュー)"];

const tasks = [
  ["スタート", <WindowsIcon />],
  ["検索", <Search size={24} strokeWidth={2.5} color="#e6eef5" />],
  ["Outlook", <OutlookIcon />, "open"],
  ["Chrome", <ChromeIcon />, "active"],
  ["Edge", <EdgeIcon />],
  ["OneNote", <OneNoteIcon />, "open"],
  ["Zoom", <ZoomIcon s={24} />],
  ["Excel", <ExcelIcon />],
  ["メモ", <MemoIcon />],
  ["Git", <GitIcon />],
  ["Slack", <SlackIcon />, "open"],
  ["Teams", <TeamsIcon />, "open"],
  ["Code", <CodeIcon />],
  ["エクスプローラー", <ExplorerIcon />, "open"],
];

const address =
  'us-east-1.console.aws.amazon.com/costmanagement/home?region=ap-northeast-1#/cost-explorer?chartStyle=STACK&costAggregate=unBlendedCost&endDate=2025-05-31&excludeForecasting=false&filter=%5B%7B"dime...';

/* ---------- page ---------- */

function Browser() {
  return (
    <>
      <TabStrip>
        <TabSearch aria-label="タブを検索"><ChevronDown size={14} strokeWidth={3} /></TabSearch>
        {tabs.map(({ title, icon, active, dense }, i) => (
          <Tab key={i} $active={active}>
            {icon}
            <TabTitle $dense={dense}>{title}</TabTitle>
            <TabClose aria-label="閉じる"><X size={13} strokeWidth={2.5} /></TabClose>
            {!active && i !== 3 && <TabDivider />}
          </Tab>
        ))}
        <NewTab aria-label="新しいタブ"><Plus size={15} /></NewTab>
        <WindowButtons>
          <IconButton $w={46} $h={40} aria-label="最小化"><Minus size={14} strokeWidth={1.5} /></IconButton>
          <IconButton $w={46} $h={40} aria-label="元に戻す"><RestoreIcon /></IconButton>
          <IconButton $w={46} $h={40} aria-label="ウィンドウを閉じる"><X size={15} strokeWidth={1.5} /></IconButton>
        </WindowButtons>
      </TabStrip>
      <Toolbar>
        <IconButton $w={36} aria-label="戻る"><ArrowLeft size={17} /></IconButton>
        <IconButton $w={36} aria-label="進む"><ArrowRight size={17} color="#7d7d7d" /></IconButton>
        <IconButton $w={36} aria-label="再読み込み"><MdRefresh size={18} /></IconButton>
        <AddressBar>
          <SiteInfo><TuneIcon /></SiteInfo>
          <AddressInput aria-label="アドレス" defaultValue={address} />
          <IconButton $w={36} aria-label="パスワード"><MdOutlineVpnKey size={18} /></IconButton>
          <IconButton $w={26} aria-label="ブックマーク"><Star size={15} /></IconButton>
        </AddressBar>
        <SIcon />
        <IconButton $w={55} aria-label="拡張機能"><MdOutlineExtension size={18} /></IconButton>
        <ToolbarDivider />
        <Avatar>k</Avatar>
        <UpdateButton>再起動して更新する<MoreVertical size={16} /></UpdateButton>
      </Toolbar>
      <Bookmarks>
        <Bookmark href="#" $folder $w={91} $dense><ManagedFolder />社内サイト</Bookmark>
        <Bookmark href="#" $w={31} aria-label="アプリ"><AppsIcon /></Bookmark>
        <BookmarkDivider />
        {bookmarks.map(([text, icon, w, dense], i) => (
          <Bookmark key={i} href="#" $w={w} $folder={icon === folder} $dense={dense}>{icon}{text}</Bookmark>
        ))}
      </Bookmarks>
    </>
  );
}

function SideNavigation() {
  return (
    <SideNav>
      <SideBody>
        <SideInner>
          <SideHead>
            <SideTitle>請求とコスト管理</SideTitle>
            <IconButton $w={20} $h={20} aria-label="閉じる"><ChevronLeft size={20} strokeWidth={2.5} color={c.body} /></IconButton>
          </SideHead>
          <FieldLabel htmlFor="billing-view">請求ビューを選択<NewTag $gap={4} $edge={c.blue}>新規</NewTag></FieldLabel>
          <Select id="billing-view" value="プライマリビュー" height={32} />
        </SideInner>
        <Rule />
        <SideInner>
          <ul>
            <NavItem $tight><a href="#">ホーム</a></NavItem>
            <NavItem $tight><a href="#">開始方法</a></NavItem>
          </ul>
          {navGroups.map(([title, items]) => (
            <React.Fragment key={title}>
              <NavGroupTitle>{title}</NavGroupTitle>
              <ul>
                {items.map((item) => (
                  <NavItem key={item} $active={item === "Cost Explorer"}>
                    <a href="#">{item}</a>
                    {item === "請求コンダクター" && <InlineIcon><ExternalIcon /></InlineIcon>}
                    {newItems.includes(item) && <NewTag href="#">新規</NewTag>}
                  </NavItem>
                ))}
              </ul>
            </React.Fragment>
          ))}
        </SideInner>
      </SideBody>
      <ScrollBar before={0} size={476} after={402} />
    </SideNav>
  );
}

function FilterPanel() {
  return (
    <Panel>
      <Handle />
      <PanelBody>
        <PanelScroll>
          <PanelGroup>
            <FieldHead>
              <FieldLabel htmlFor="dimension">ディメンション</FieldLabel>
              <LinkButton>クリア</LinkButton>
            </FieldHead>
            <Select id="dimension" value="サービス" height={32} />
          </PanelGroup>
          <PanelRule />
          <PanelGroup>
            <FilterHead>
              <Caret />
              <FilterTitle>フィルター<InfoLink href="#">情報</InfoLink></FilterTitle>
            </FilterHead>
            <FilterSummary>
              <span>適用フィルター (1)</span>
              <Grow />
              <LinkButton>すべてをクリア</LinkButton>
              <Pipe />
              <LinkButton aria-label="設定"><Settings size={17} strokeWidth={2.5} /></LinkButton>
            </FilterSummary>
            <Filter label="サービス" />
            <Filter label="連結アカウント" />
            <Filter label="リージョン" />
            <Filter label="インスタンスタイプ" />
            <Filter label="使用タイプ" />
            <Filter label="使用タイプグループ" />
            <Filter label="Resource" value="リソース向けサービス を選択" height={32} />
            <Filter label="コストカテゴリ" height={32} />
            <Filter label="タグ" height={32} />
            <Field $nested>
              <FieldHead>
                <FieldLabel htmlFor="tag-cost">Cost</FieldLabel>
                <LinkButton>クリア</LinkButton>
              </FieldHead>
              <SelectWrap>
                <MultiSelect id="tag-cost" aria-haspopup="listbox">「<i>Cost</i>」タグを含む <i>(1)</i></MultiSelect>
                <SelectCaret><Caret /></SelectCaret>
              </SelectWrap>
              <Token>drone_takahira<LinkButton aria-label="削除"><X size={22} /></LinkButton></Token>
            </Field>
            <Filter label="料金タイプ" />
          </PanelGroup>
        </PanelScroll>
      </PanelBody>
      <ScrollBar before={140} size={379} after={362} />
    </Panel>
  );
}

function Report() {
  return (
    <Main>
      <PageHead>
        <PageTitle>新しいコストと使用状況レポート</PageTitle>
        <PillButton $icon><Funnel size={17} strokeWidth={2.5} />レポートパラメータ</PillButton>
        <PillButton>最近のレポート<Caret w={12} h={10} /></PillButton>
        <PillButton $primary>レポートライブラリに保存</PillButton>
      </PageHead>
      <Card>
        <CardTitle>コストと使用量の概要<InfoLink href="#">情報</InfoLink></CardTitle>
        <Metrics>
          <Metric><MetricLabel>合計コスト</MetricLabel><MetricValue>$4.81</MetricValue></Metric>
          <Metric><MetricLabel>1 日あたりの平均コスト</MetricLabel><MetricValue>$0.16</MetricValue></Metric>
          <Metric><MetricLabel>サービス カウント</MetricLabel><MetricValue>1</MetricValue></Metric>
        </Metrics>
      </Card>
      <Card>
        <CardTitle>コストと使用量のグラフ</CardTitle>
        <SplitRow $gap={22}>
          <AxisTitle>コスト ($)</AxisTitle>
          <Segments>
            <Segment aria-label="棒"><BarsIcon /></Segment>
            <SegmentDivider />
            <Segment aria-label="折れ線"><LineIcon /></Segment>
            <SegmentDivider />
            <Segment $active aria-label="積み上げ"><StackIcon /></Segment>
          </Segments>
        </SplitRow>
        <CostChart />
      </Card>
      <Card $top={12}>
        <SplitRow>
          <CardTitle>コストと使用量の内訳</CardTitle>
          <PillButton $icon><DownloadIcon />CSV 形式でダウンロード</PillButton>
        </SplitRow>
        <TableSearch aria-label="コストと使用量の内訳を検索" />
      </Card>
    </Main>
  );
}

export default function App() {
  return (
    <Screen>
      <GlobalStyle />
      <Browser />
      <Viewport>
        <Page>
          <TopNav>
            <FaAws size={32} color="#fff" />
            <NavDivider $m={16} />
            <NineDots />
            <SearchBox>
              <Search size={17} strokeWidth={2.5} color="#ebebf0" />
              <SearchInput placeholder="検索" aria-label="検索" />
              <span>[Alt+S]</span>
            </SearchBox>
            <NavButton aria-label="CloudShell"><SquareTerminal size={19} strokeWidth={2.2} /></NavButton>
            <NavDivider />
            <NavButton aria-label="通知"><Bell size={18} strokeWidth={2.2} /></NavButton>
            <NavDivider />
            <NavButton aria-label="ヘルプ"><CircleHelp size={18} strokeWidth={2.2} /></NavButton>
            <NavDivider />
            <NavButton aria-label="設定"><Settings size={18} strokeWidth={2.2} /></NavButton>
            <NavDivider />
            <NavButton $pad={17} $light>グローバル<Caret w={9} h={8} /></NavButton>
            <NavDivider />
            <NavButton $pad={19}>takahira @ 9750-5008-7718<Caret w={9} h={8} /></NavButton>
          </TopNav>
          <Crumbs>
            <MenuButton aria-label="メニュー"><Menu size={18} strokeWidth={2.5} /></MenuButton>
            <CrumbLink href="#">請求とコスト管理</CrumbLink>
            <CrumbArrow />
            <CrumbLink href="#">Cost Explorer</CrumbLink>
            <CrumbArrow />
            <CrumbCurrent>新しいコストと使用状況レポート</CrumbCurrent>
            <CrumbTools>
              <IconButton $w={18} aria-label="情報"><Info size={17} strokeWidth={2.5} /></IconButton>
              <ToolDivider />
              <IconButton $w={18} aria-label="アシスタント"><HexQ /></IconButton>
            </CrumbTools>
          </Crumbs>
          <Columns>
            <SideNavigation />
            <Report />
            <FilterPanel />
          </Columns>
          <Footer>
            <FooterLink href="#" $first><SquareTerminal size={18} strokeWidth={2.2} />CloudShell</FooterLink>
            <FooterLink href="#">フィードバック</FooterLink>
            <Copyright>© 2025, Amazon Web Services, Inc. またはその関連会社。</Copyright>
            <FooterLink href="#" $gap={28}>プライバシー</FooterLink>
            <FooterLink href="#" $gap={25}>用語</FooterLink>
            <FooterLink href="#" $gap={25}>Cookie の設定</FooterLink>
          </Footer>
        </Page>
        <ScrollBar dark before={0} size={683} after={309} />
      </Viewport>
      <TaskBar>
        {tasks.map(([name, icon, state]) => (
          <TaskButton key={name} aria-label={name} $active={state === "active"} $open={state === "open"}>{icon}</TaskButton>
        ))}
        <Tray>
          <ChevronUp size={18} />
          <SafeIcon />
          <CloudIcon />
          <LetterA />
          <TrayStatus aria-label="ネットワークと音量">
            <Wifi size={18} strokeWidth={1.8} />
            <Volume2 size={17} strokeWidth={1.6} />
            <BatteryIcon />
          </TrayStatus>
          <Clock>20:45<br />2025/06/01</Clock>
          <Bell size={17} color="#4cb2ff" fill="#4cb2ff" />
        </Tray>
      </TaskBar>
    </Screen>
  );
}
